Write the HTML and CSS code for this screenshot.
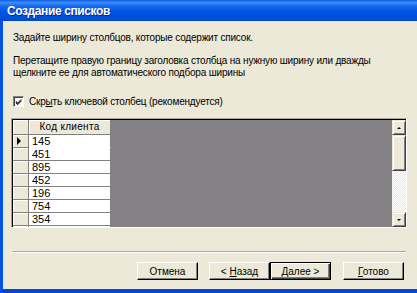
FILE: index.html
```html
<!DOCTYPE html>
<html>
<head>
<meta charset="utf-8">
<link rel="stylesheet" href="styles.css">
</head>
<body>
<div class="window">
  <div class="titlebar"><span class="title">Создание списков</span></div>
  <div class="client">
    <p class="intro">Задайте ширину столбцов, которые содержит список.</p>
    <p class="hint">Перетащите правую границу заголовка столбца на нужную ширину или дважды<br>щелкните ее для автоматического подбора ширины</p>
    <label class="check">
      <span class="box"><svg width="9" height="9" viewBox="0 0 9 9"><path d="M1 3 L3 5 L7 1 M1 4 L3 6 L7 2 M1 5 L3 7 L7 3" stroke="#000" stroke-width="1" fill="none"/></svg></span>
      <span>Скр<u>ы</u>ть ключевой столбец (рекомендуется)</span>
    </label>
    <div class="grid">
      <div class="sheet">
        <div class="cols">
          <div class="col sel">
            <div class="hcell"></div>
            <div class="scell cur"><span class="arrow"></span></div>
            <div class="scell"></div>
            <div class="scell"></div>
            <div class="scell"></div>
            <div class="scell"></div>
            <div class="scell"></div>
            <div class="scell"></div>
            <div class="scell"></div>
          </div>
          <div class="col key">
            <div class="hcell">Код клиента</div>
            <div class="dcell first">145</div>
            <div class="dcell">451</div>
            <div class="dcell">895</div>
            <div class="dcell">452</div>
            <div class="dcell">196</div>
            <div class="dcell">754</div>
            <div class="dcell">354</div>
            <div class="dcell"></div>
          </div>
          <div class="col empty"></div>
        </div>
      </div>
      <div class="vscroll">
        <div class="sbtn"><span class="up"></span></div>
        <div class="thumb"></div>
        <div class="track"></div>
        <div class="sbtn"><span class="down"></span></div>
      </div>
    </div>
    <div class="sep"></div>
    <div class="buttons">
      <button class="btn">Отмена</button>
      <div class="pair">
        <button class="btn">&lt; <u>Н</u>азад</button>
        <button class="btn default"><u>Д</u>алее &gt;</button>
      </div>
      <button class="btn"><u>Г</u>отово</button>
    </div>
  </div>
</div>
</body>
</html>
```
FILE: styles.css
```css
* { box-sizing: border-box; }
html, body { margin: 0; padding: 0; }
body {
  width: 417px;
  height: 293px;
  overflow: hidden;
  font-family: "Liberation Sans", Arial, sans-serif;
  font-size: 10px;
  color: #000;
}
.window {
  width: 417px;
  height: 293px;
  display: flex;
  flex-direction: column;
}
.titlebar {
  height: 21px;
  flex: none;
  display: flex;
  align-items: center;
  padding-left: 7px;
  background: linear-gradient(180deg, #0a5ce8 0%, #3d8cf5 12%, #1466ee 30%, #0055e6 55%, #0050de 80%, #0047cc 100%);
}
.title {
  color: #fff;
  font-weight: bold;
  font-size: 12px;
  letter-spacing: -0.4px;
  text-shadow: 1px 1px 0 #0a2a8a;
}
.client {
  flex: 1;
  background: #ece9d8;
  border-left: 3px solid #0553e6;
  border-bottom: 4px solid #0446d4;
  display: flex;
  flex-direction: column;
  padding-left: 10px;
}
.intro {
  margin: 11px 0 0;
  line-height: 12px;
  letter-spacing: -0.2px;
}
.hint {
  margin: 11px 0 0;
  line-height: 12px;
  letter-spacing: -0.2px;
}
.check {
  margin-top: 16px;
  display: flex;
  align-items: center;
  gap: 5px;
  height: 13px;
  letter-spacing: -0.2px;
}
.box {
  width: 11px;
  height: 11px;
  background: #fff;
  border-top: 1px solid #808080;
  border-left: 1px solid #808080;
  border-right: 1px solid #fff;
  border-bottom: 1px solid #fff;
  box-shadow: inset 1px 1px 0 #404040;
  display: flex;
  align-items: center;
  justify-content: center;
  padding: 1px 0 0 1px;
}
.box svg { display: block; }
.grid {
  margin: 10px 0 0 -2px;
  width: 396px;
  height: 110px;
  display: flex;
  border-top: 1px solid #aca899;
  border-left: 1px solid #aca899;
  border-right: 1px solid #fff;
  border-bottom: 1px solid #fff;
}
.sheet {
  flex: 1;
  border-top: 1px solid #000;
  border-left: 1px solid #000;
  background: #848284;
  overflow: hidden;
}
.cols {
  display: flex;
  height: 100%;
}
.col { display: flex; flex-direction: column; }
.sel { width: 16px; background: #ece9d8; }
.key { width: 82px; }
.empty { flex: 1; }
.hcell {
  height: 15px;
  flex: none;
  background: #ece9d8;
  border-right: 1px solid #808080;
  border-bottom: 1px solid #808080;
  box-shadow: inset 1px 1px 0 #fff;
  text-align: center;
  line-height: 14px;
  font-size: 10px;
  letter-spacing: 0.3px;
}
.scell {
  height: 13px;
  flex: none;
  border-right: 1px solid #808080;
  border-bottom: 1px solid #808080;
  box-shadow: inset 1px 1px 0 #fff;
  display: flex;
  align-items: center;
  padding-left: 4px;
}
.arrow {
  width: 0;
  height: 0;
  border-top: 4px solid transparent;
  border-bottom: 4px solid transparent;
  border-left: 4px solid #000;
}
.dcell {
  height: 13px;
  flex: none;
  background: #fff;
  border-right: 1px solid #808080;
  border-bottom: 1px solid #808080;
  padding-left: 3px;
  line-height: 12px;
  font-size: 11px;
}
.dcell.first { border-bottom-color: #fff; }
.vscroll {
  width: 14px;
  display: flex;
  flex-direction: column;
  border-top: 1px solid #000;
}
.sbtn, .thumb {
  background: #ece9d8;
  border-top: 1px solid #ece9d8;
  border-left: 1px solid #ece9d8;
  border-right: 1px solid #404040;
  border-bottom: 1px solid #404040;
  box-shadow: inset 1px 1px 0 #fff, inset -1px -1px 0 #808080;
}
.sbtn {
  height: 15px;
  flex: none;
  display: flex;
  align-items: center;
  justify-content: center;
}
.thumb { height: 36px; flex: none; }
.track {
  flex: 1;
  background-color: #f4f3ee;
  background-image: repeating-conic-gradient(#ffffff 0 25%, #ece9d8 0 50%);
  background-size: 2px 2px;
}
.up {
  width: 0; height: 0;
  border-left: 2px solid transparent;
  border-right: 2px solid transparent;
  border-bottom: 2px solid #000;
}
.down {
  width: 0; height: 0;
  border-left: 2px solid transparent;
  border-right: 2px solid transparent;
  border-top: 2px solid #000;
}
.sep {
  margin: 23px 0 0 -1px;
  width: 394px;
  height: 2px;
  border-top: 1px solid #aca899;
  border-bottom: 1px solid #fff;
}
.buttons {
  margin-top: 9px;
  display: flex;
  justify-content: flex-end;
  gap: 11px;
  padding-right: 13px;
}
.pair { display: flex; }
.btn {
  width: 61px;
  height: 18px;
  padding: 0;
  font-family: "Liberation Sans", Arial, sans-serif;
  font-size: 10px;
  color: #000;
  background: #ece9d8;
  border-top: 1px solid #fff;
  border-left: 1px solid #fff;
  border-right: 1px solid #000;
  border-bottom: 1px solid #000;
  box-shadow: inset -1px -1px 0 #808080;
}
.btn.default {
  border: 1px solid #000;
  box-shadow: inset 1px 1px 0 #fff, inset -1px -1px 0 #404040, inset -2px -2px 0 #808080;
}
.buttons > .btn:last-child { margin-left: 1px; }
```
